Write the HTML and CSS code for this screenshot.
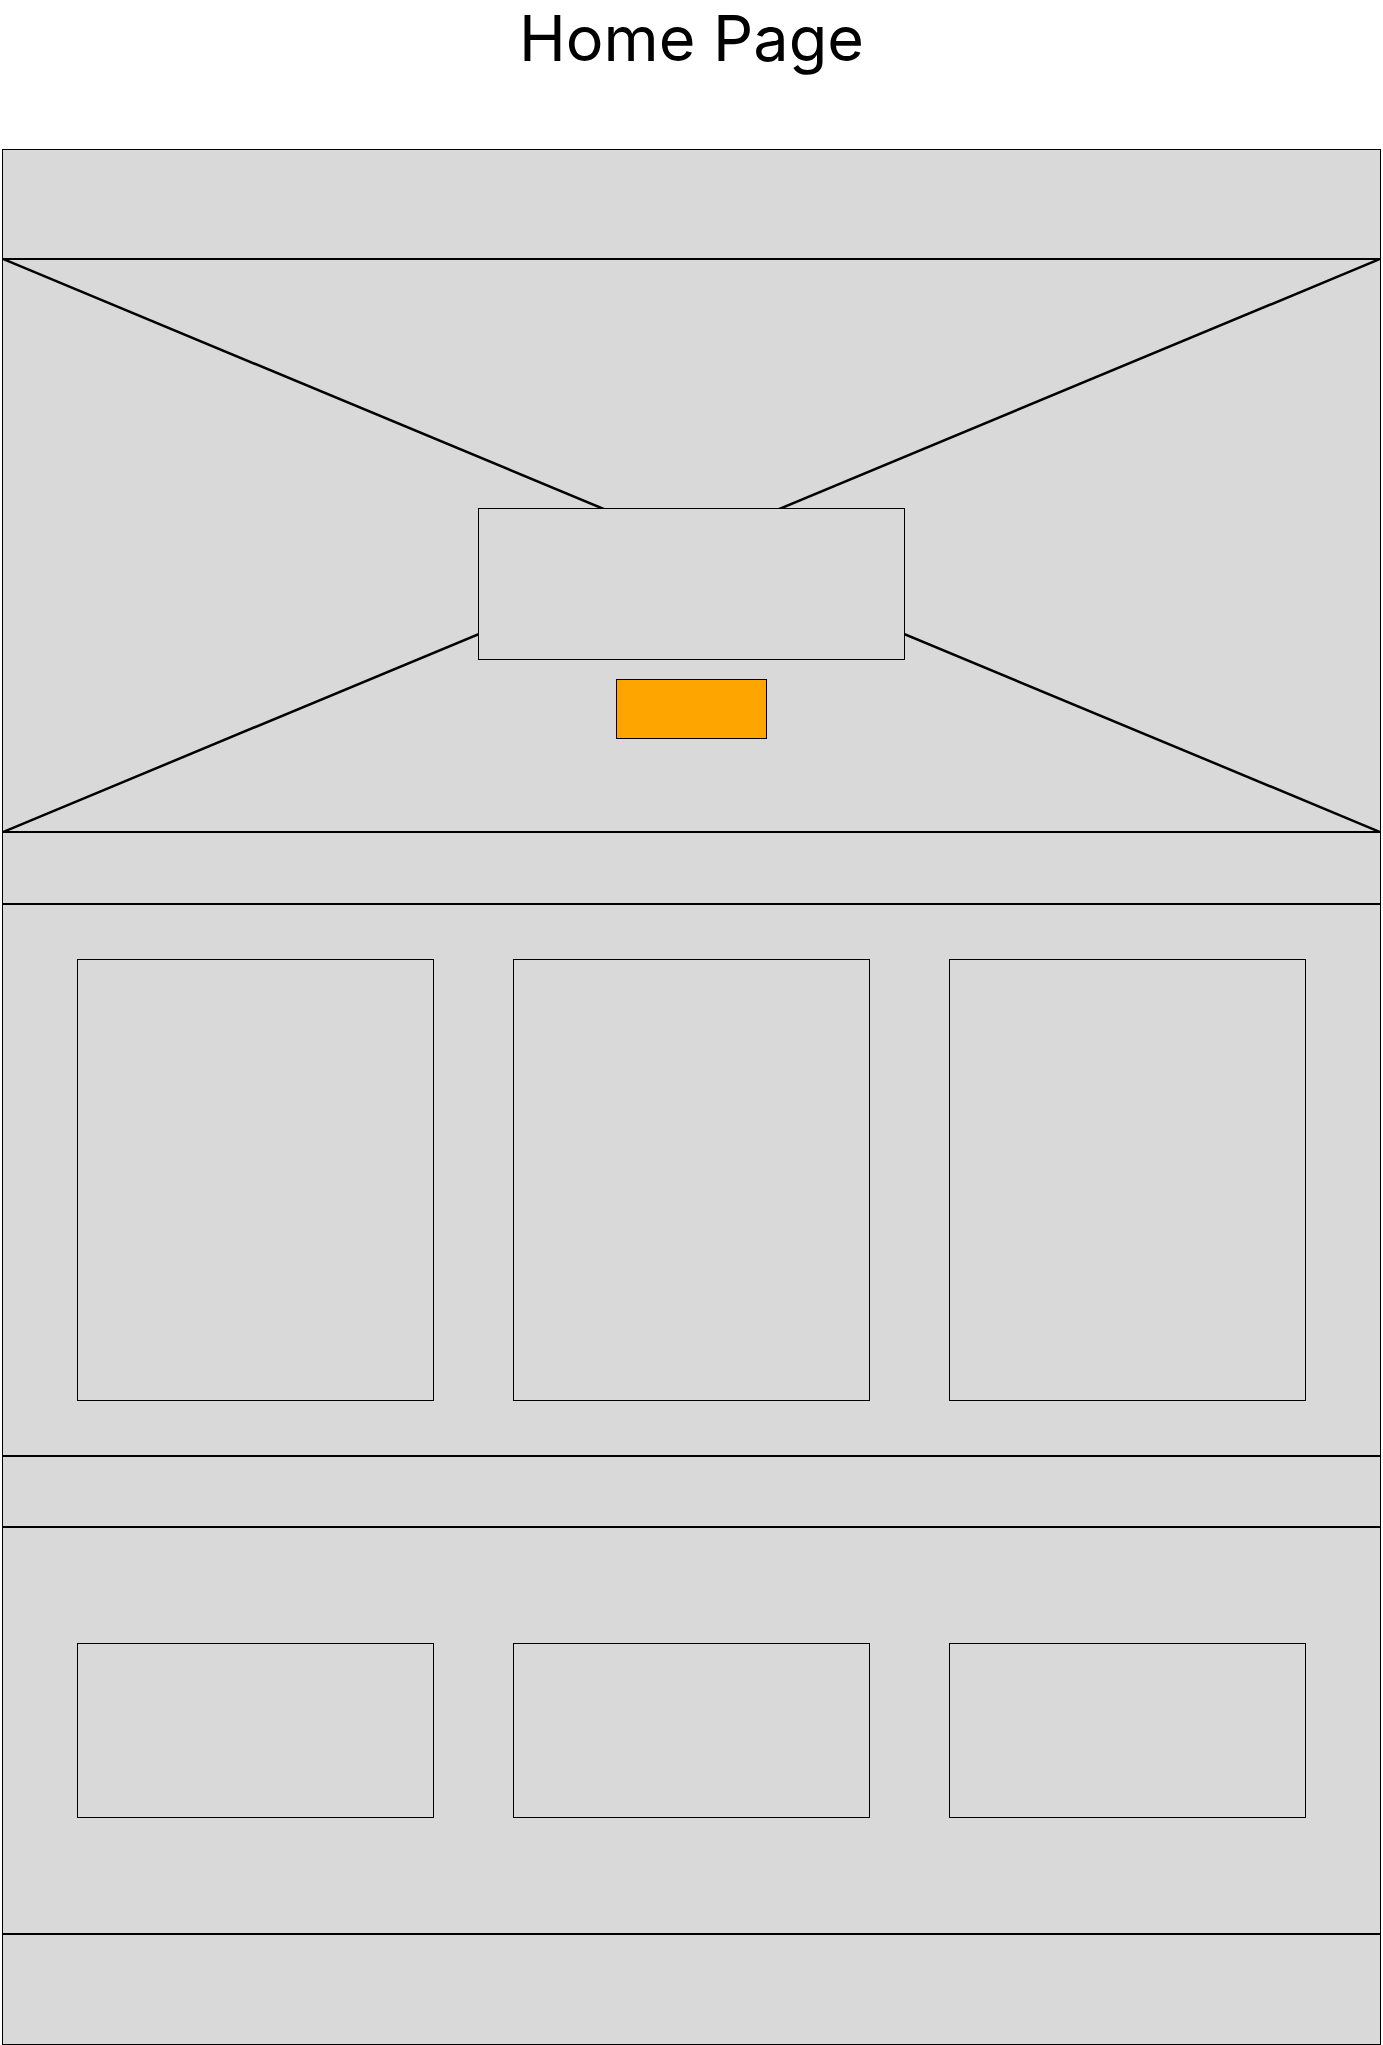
FILE: index.html
```html
<!DOCTYPE html>
<html lang="en">
<head>
  <meta charset="UTF-8">
  <title>Home Page</title>
  <link rel="stylesheet" href="styles.css">
</head>
<body>

  <h1 class="page-title">Home Page</h1>

  <!-- Wireframe -->
  <div class="frame">
    <div class="header"></div>

    <div class="hero">
      <svg class="hero-cross" viewBox="0 0 100 100" preserveAspectRatio="none">
        <line x1="0" y1="0" x2="100" y2="100" vector-effect="non-scaling-stroke" />
        <line x1="100" y1="0" x2="0" y2="100" vector-effect="non-scaling-stroke" />
      </svg>
      <div class="hero-box"></div>
      <div class="hero-button"></div>
    </div>

    <div class="band"></div>

    <div class="cards tall">
      <div class="card"></div>
      <div class="card"></div>
      <div class="card"></div>
    </div>

    <div class="band band-short"></div>

    <div class="cards short">
      <div class="card"></div>
      <div class="card"></div>
      <div class="card"></div>
    </div>

    <div class="footer"></div>
  </div>

</body>
</html>
```

FILE: styles.css
```css
html, body {
  margin: 0;
  padding: 0;
  background: #fff;
  font-family: 'Inter', 'Liberation Sans', sans-serif;
}

.page-title {
  margin: 0 0 73px;
  font-size: 63px;
  font-weight: 400;
  line-height: 76px;
  text-align: center;
  color: #000;
}

.frame {
  margin: 0 2px;
  border: 1px solid #000;
  background: #d9d9d9;
}

.header {
  height: 108px;
  border-bottom: 2px solid #000;
}

.hero {
  position: relative;
  height: 573px;
  border-bottom: 2px solid #000;
  display: flex;
  flex-direction: column;
  align-items: center;
  padding-top: 248px;
  box-sizing: border-box;
}

.hero-cross {
  position: absolute;
  top: -1px; left: 0;
  width: 100%;
  height: calc(100% + 2px);
}

.hero-cross line {
  stroke: #000;
  stroke-width: 2.5;
}

.hero-box {
  position: relative;
  width: 427px;
  height: 152px;
  box-sizing: border-box;
  border: 1px solid #000;
  background: #d9d9d9;
}

.hero-button {
  position: relative;
  margin-top: 19px;
  width: 151px;
  height: 60px;
  box-sizing: border-box;
  border: 1px solid #000;
  background: #ffa500;
}

.band {
  height: 70px;
  border-bottom: 2px solid #000;
}

.band-short {
  height: 69px;
}

.cards {
  display: flex;
  justify-content: center;
  gap: 79px;
  border-bottom: 2px solid #000;
  box-sizing: border-box;
}

.cards.tall {
  padding: 54px 0;
  height: 552px;
}

.cards.short {
  padding: 115px 0;
  height: 407px;
}

.card {
  width: 357px;
  box-sizing: border-box;
  border: 1px solid #000;
}

.footer {
  height: 109px;
}
```
